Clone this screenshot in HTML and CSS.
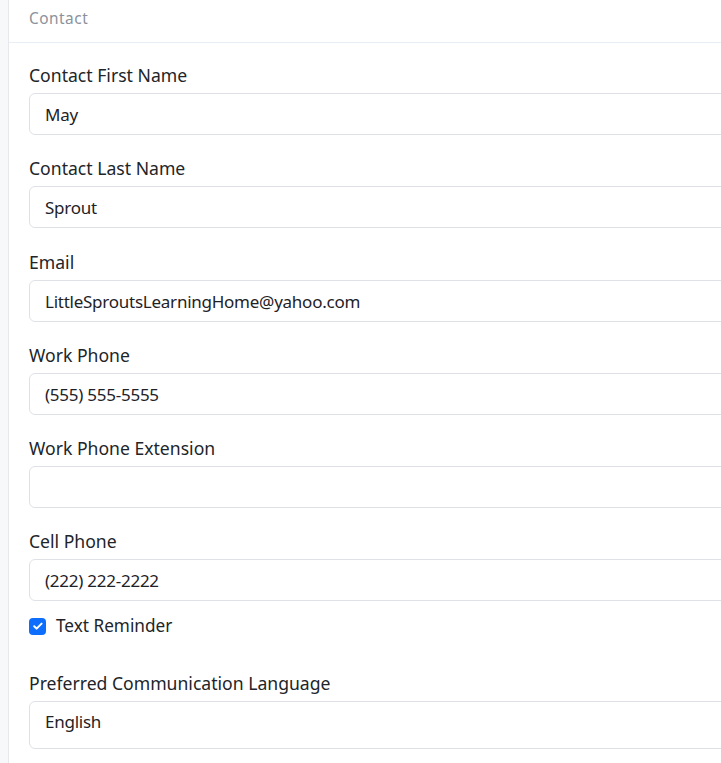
FILE: index.html
```html
<!DOCTYPE html>
<html lang="en">
<head>
<meta charset="utf-8">
<title>Contact</title>
<link rel="stylesheet" href="styles.css">
</head>
<body>
<div class="page">
  <section class="card">
    <header class="card-header">Contact</header>
    <div class="card-body">
      <div class="field">
        <label class="label">Contact First Name</label>
        <div class="input">May</div>
      </div>
      <div class="field">
        <label class="label">Contact Last Name</label>
        <div class="input">Sprout</div>
      </div>
      <div class="field">
        <label class="label">Email</label>
        <div class="input">LittleSproutsLearningHome@yahoo.com</div>
      </div>
      <div class="field">
        <label class="label">Work Phone</label>
        <div class="input">(555) 555-5555</div>
      </div>
      <div class="field">
        <label class="label">Work Phone Extension</label>
        <div class="input"></div>
      </div>
      <div class="field field-tight">
        <label class="label">Cell Phone</label>
        <div class="input">(222) 222-2222</div>
      </div>
      <div class="check-row">
        <span class="checkbox"><svg viewBox="0 0 16 16" width="16" height="16"><path d="M4.2 8.2l2.4 2.4 5-5" fill="none" stroke="#fff" stroke-width="2" stroke-linecap="round" stroke-linejoin="round"/></svg></span>
        <span class="check-label">Text Reminder</span>
      </div>
      <div class="field">
        <label class="label">Preferred Communication Language</label>
        <div class="input input-select">English</div>
      </div>
    </div>
  </section>
</div>
</body>
</html>
```

FILE: styles.css
```css
html, body {
  margin: 0;
  padding: 0;
  overflow: hidden;
}
body {
  background: #f7f8f9;
  font-family: "Noto Sans", "Open Sans", sans-serif;
  color: #212529;
}
.page {
  padding-left: 8px;
  width: 1000px;
}
.card {
  background: #fff;
  border-left: 1px solid #e6e8eb;
  min-height: 800px;
}
.card-header {
  height: 43px;
  box-sizing: border-box;
  padding: 8px 20px 0;
  font-size: 15.4px;
  line-height: 22px;
  letter-spacing: 0.5px;
  color: #8b929b;
  border-bottom: 1px solid #e8eef6;
}
.card-body {
  padding: 19px 20px 0;
}
.field {
  margin-bottom: 20.25px;
}
.field-tight {
  margin-bottom: 12px;
}
.label {
  display: block;
  font-size: 17.6px;
  line-height: 26px;
  margin-bottom: 5px;
}
.input {
  height: 42px;
  box-sizing: border-box;
  border: 1px solid #dee2e6;
  border-radius: 6px;
  padding: 8px 15px 6px;
  font-size: 17px;
  line-height: 26px;
  letter-spacing: -0.25px;
  color: #1e2226;
}
.input-select {
  height: 48px;
  padding-top: 7px;
}
.check-row {
  display: flex;
  align-items: center;
  gap: 10px;
  height: 26px;
  margin-bottom: 31px;
}
.checkbox {
  width: 17px;
  height: 17px;
  border-radius: 4px;
  background: #0d6efd;
  display: flex;
  align-items: center;
  justify-content: center;
}
.check-label {
  font-size: 17.2px;
  line-height: 26px;
}
```
